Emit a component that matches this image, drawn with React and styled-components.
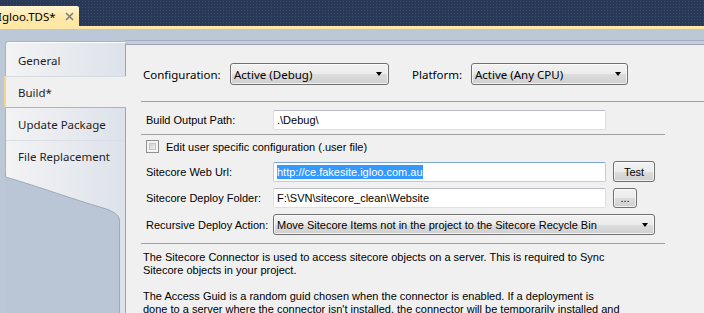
import React from "react";
import styled, { createGlobalStyle, css } from "styled-components";

const segoe = `"Noto Sans", "Open Sans", sans-serif`;
const mss = `"Liberation Sans", Arial, sans-serif`;

const GlobalStyle = createGlobalStyle`
  html, body {
    margin: 0;
    padding: 0;
    background: #bcc7d8;
    overflow: hidden;
  }
  * {
    box-sizing: border-box;
  }
`;

const Window = styled.div`
  width: 704px;
  height: 313px;
  display: flex;
  flex-direction: column;
  overflow: hidden;
`;

const DocBar = styled.div`
  height: 26px;
  flex-shrink: 0;
  padding-top: 6px;
  display: flex;
  background-color: #293955;
  background-image: radial-gradient(#3c4e70 0.8px, transparent 0.9px);
  background-size: 3px 3px;
`;

const DocTab = styled.div`
  width: 79px;
  height: 20px;
  display: flex;
  align-items: center;
  justify-content: space-between;
  padding-right: 5px;
  background: linear-gradient(#fff4d2, #ffe8a6 60%);
  border-top-right-radius: 2px;
  font-family: ${segoe};
  font-size: 11.5px;
  color: #000;
`;

const DocTitle = styled.span`
  margin-left: -2px;
  white-space: nowrap;
`;

const DocStripe = styled.div`
  height: 3px;
  flex-shrink: 0;
  background: #ffe8a6;
`;

const Body = styled.div`
  flex: 1;
  min-height: 0;
  display: flex;
  padding-top: 11px;
  overflow: hidden;
  background: #bcc7d8;
`;

const Side = styled.div`
  width: 125px;
  padding: 1px 0 0 5px;
  display: flex;
  flex-direction: column;
  flex-shrink: 0;
`;

const TabList = styled.div`
  padding-top: 2px;
  border-top: 1px solid #a9b3c4;
  border-left: 1px solid #a9b3c4;
  border-top-left-radius: 3px;
  background: linear-gradient(90deg, #f3f3f4, #dde2ea);
  box-shadow: inset 0 1px 0 #ffffff;
`;

const Tab = styled.div`
  height: 32px;
  display: flex;
  align-items: center;
  padding-left: 12px;
  font-family: ${segoe};
  font-size: 11.5px;
  color: #1e1e1e;
  white-space: nowrap;
  ${(p) =>
    p.$divider &&
    css`
      box-shadow: inset 0 1px 0 #d9dde4;
    `}
  ${(p) =>
    p.$active &&
    css`
      position: relative;
      z-index: 1;
      margin: 0 -1px 0 -2px;
      padding-left: 12px;
      background: #f0f0f0;
      border-top: 1px solid #d6dae1;
      border-bottom: 1px solid #a9b3c4;
      border-left: 2px solid #f3d48a;
    `}
`;

const Tail = styled.svg`
  display: block;
  flex-shrink: 0;
  width: 120px;
  height: 141px;
`;

const PanelOuter = styled.div`
  flex: 1;
  display: flex;
  flex-direction: column;
  border-top: 1px solid #a3adbf;
  padding-top: 3px;
  background: #c5cddb;
`;

const Panel = styled.div`
  flex: 1;
  display: flex;
  flex-direction: column;
  background: #f0f0f0;
  border-top: 1px solid #9aa5b7;
  border-left: 1px solid #9aa5b7;
  padding-left: 15px;
  font-family: ${mss};
  font-size: 11px;
  color: #000;
`;

const ConfigRow = styled.div`
  display: flex;
  align-items: center;
  flex-shrink: 0;
  margin-top: 18px;
  padding-left: 2px;
  font-family: ${segoe};
  font-size: 11.5px;
`;

const ConfigLabel = styled.span`
  width: ${(p) => p.$w}px;
  margin-left: ${(p) => p.$ml || 0}px;
  white-space: nowrap;
`;

const Select = styled.div`
  width: ${(p) => p.$w}px;
  height: ${(p) => p.$h || 22}px;
  display: flex;
  align-items: center;
  justify-content: space-between;
  padding: 0 6px 0 3px;
  border: 1px solid #707070;
  border-radius: 3px;
  background: linear-gradient(#f2f2f2 0%, #ebebeb 50%, #dddddd 51%, #cfcfcf 100%);
  box-shadow: inset 0 0 0 1px rgba(255, 255, 255, 0.7);
  font-family: ${(p) => (p.$ms ? mss : segoe)};
  font-size: ${(p) => (p.$ms ? 11 : 11.5)}px;
  white-space: nowrap;
  overflow: hidden;
`;

const Arrow = styled.span`
  width: 0;
  height: 0;
  flex-shrink: 0;
  border-left: 3.5px solid transparent;
  border-right: 3.5px solid transparent;
  border-top: 4px solid #000;
`;

const Separator = styled.div`
  height: 1px;
  flex-shrink: 0;
  margin-top: ${(p) => p.$mt}px;
  width: ${(p) => (p.$full ? "auto" : "524px")};
  background: #a0a0a0;
`;

const FieldRow = styled.div`
  display: flex;
  align-items: center;
  flex-shrink: 0;
  margin-top: ${(p) => p.$mt}px;
  padding-left: 5px;
  gap: 7px;
`;

const FieldLabel = styled.span`
  width: 120px;
  white-space: nowrap;
`;

const TextBox = styled.div`
  width: ${(p) => p.$w || 333}px;
  height: 20px;
  display: flex;
  align-items: center;
  padding-left: 3px;
  background: #fff;
  border: 1px solid ${(p) => (p.$focus ? "#b4cfea" : "#dcdfe4")};
  border-top-color: ${(p) => (p.$focus ? "#7fa6d2" : "#b9bcc2")};
  border-radius: 2px;
  white-space: nowrap;
  overflow: hidden;
`;

const Selected = styled.span`
  background: #3399ff;
  color: #fff;
  line-height: 14px;
`;

const Button = styled.div`
  width: ${(p) => p.$w}px;
  height: ${(p) => p.$h}px;
  display: flex;
  align-items: center;
  justify-content: center;
  border: 1px solid #707070;
  border-radius: 3px;
  background: linear-gradient(#f2f2f2 0%, #ebebeb 50%, #dddddd 51%, #cfcfcf 100%);
  box-shadow: inset 0 0 0 1px rgba(255, 255, 255, 0.7);
  font-size: 11px;
`;

const CheckRow = styled.div`
  display: flex;
  align-items: center;
  flex-shrink: 0;
  gap: 7px;
  margin-top: 5px;
  padding-left: 5px;
  height: 13px;
`;

const CheckBox = styled.span`
  width: 13px;
  height: 13px;
  border: 1px solid #8e8f8f;
  background: #f4f4f4;
  padding: 2px;
  display: flex;

  &::after {
    content: "";
    flex: 1;
    border: 1px solid #c4c4c4;
    background: linear-gradient(135deg, #cfcfcf, #f3f3f3);
  }
`;

const Para = styled.p`
  margin: ${(p) => p.$mt}px 0 0;
  flex-shrink: 0;
  padding-left: 2px;
  line-height: 13px;
  white-space: nowrap;
`;

const CloseIcon = () => (
  <svg width="9" height="9" viewBox="0 0 9 9">
    <path d="M1 1 L8 8 M8 1 L1 8" stroke="#7d7d7d" strokeWidth="1.6" />
  </svg>
);

const TailShape = () => (
  <Tail viewBox="0 0 120 141">
    <defs>
      <linearGradient id="tabgrad" x1="0" x2="1" y1="0" y2="0">
        <stop offset="0" stopColor="#f3f3f4" />
        <stop offset="1" stopColor="#dde2ea" />
      </linearGradient>
    </defs>
    <rect x="0" y="0" width="120" height="141" fill="url(#tabgrad)" />
    <path
      d="M0 5 C35 15 70 28 95 35 Q114 40 114.5 48 V141 H0 Z"
      fill="#bac6d6"
    />
    <path
      d="M0.5 0 V5 C35 15 70 28 95 35 Q114 40 114.5 48 V141"
      fill="none"
      stroke="#9eaabc"
      strokeWidth="1"
    />
  </Tail>
);

export default function App() {
  return (
    <Window>
      <GlobalStyle />
      <DocBar>
        <DocTab>
          <DocTitle>Igloo.TDS*</DocTitle>
          <CloseIcon />
        </DocTab>
      </DocBar>
      <DocStripe />
      <Body>
        <Side>
          <TabList>
            <Tab>General</Tab>
            <Tab $active>Build*</Tab>
            <Tab>Update Package</Tab>
            <Tab $divider>File Replacement</Tab>
          </TabList>
          <TailShape />
        </Side>
        <PanelOuter>
          <Panel>
            <ConfigRow>
              <ConfigLabel $w={87}>Configuration:</ConfigLabel>
              <Select $w={159}>
                Active (Debug)
                <Arrow />
              </Select>
              <ConfigLabel $w={59} $ml={23}>
                Platform:
              </ConfigLabel>
              <Select $w={157}>
                Active (Any CPU)
                <Arrow />
              </Select>
            </ConfigRow>
            <Separator $mt={16} $full />
            <FieldRow $mt={8}>
              <FieldLabel>Build Output Path:</FieldLabel>
              <TextBox>.\Debug\</TextBox>
            </FieldRow>
            <Separator $mt={4} />
            <CheckRow>
              <CheckBox />
              <span>Edit user specific configuration (.user file)</span>
            </CheckRow>
            <FieldRow $mt={8}>
              <FieldLabel>Sitecore Web Url:</FieldLabel>
              <TextBox $focus>
                <Selected>http://ce.fakesite.igloo.com.au</Selected>
              </TextBox>
              <Button $w={42} $h={21}>
                Test
              </Button>
            </FieldRow>
            <FieldRow $mt={6}>
              <FieldLabel>Sitecore Deploy Folder:</FieldLabel>
              <TextBox>F:\SVN\sitecore_clean\Website</TextBox>
              <Button $w={24} $h={20}>
                ...
              </Button>
            </FieldRow>
            <FieldRow $mt={6}>
              <FieldLabel>Recursive Deploy Action:</FieldLabel>
              <Select $w={382} $h={21} $ms>
                Move Sitecore Items not in the project to the Sitecore Recycle Bin
                <Arrow />
              </Select>
            </FieldRow>
            <Separator $mt={8} />
            <Para $mt={7}>
              The Sitecore Connector is used to access sitecore objects on a server. This is required to Sync
              <br />
              Sitecore objects in your project.
            </Para>
            <Para $mt={13}>
              The Access Guid is a random guid chosen when the connector is enabled. If a deployment is
              <br />
              done to a server where the connector isn't installed, the connector will be temporarily installed and
            </Para>
          </Panel>
        </PanelOuter>
      </Body>
    </Window>
  );
}
